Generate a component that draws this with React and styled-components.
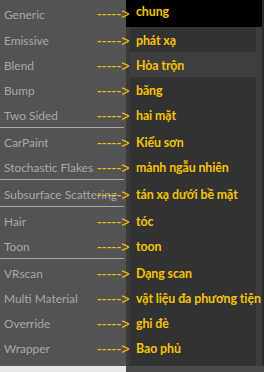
import styled, {createGlobalStyle} from 'styled-components'

const GlobalStyle = createGlobalStyle`
    html, body {
        margin: 0;
        padding: 0;
        background: #2a2a2a;
    }
    body {
        font-family: Lato, "Open Sans", "Liberation Sans", sans-serif;
    }
`

const Screen = styled.div`
    display: flex;
    flex-direction: column;
    width: 264px;
    height: 372px;
    overflow: hidden;
`

const List = styled.div`
    display: flex;
    flex-direction: column;
    background: #2a2a2a;
`

const Row = styled.div`
    position: relative;
    display: grid;
    grid-template-columns: 126px 1fr;
    height: ${p => p.$h}px;
    padding-right: 2px;
`

const Label = styled.div`
    display: flex;
    align-items: center;
    padding-left: 4px;
    padding-top: 2px;
    background: #535353;
    color: #a7a9ab;
    font-size: 11.9px;
    white-space: nowrap;
    overflow: visible;
`

const Line = styled.div`
    background: #535353;
    display: flex;
    align-items: flex-start;

    &::before {
        content: '';
        display: block;
        width: 124px;
        height: 1px;
        background: #a6a6a6;
    }
`

const Cell = styled.div`
    display: flex;
    align-items: ${p => p.$head ? 'flex-start' : 'center'};
    padding-left: 6px;
    padding-top: ${p => p.$head ? '4px' : '2px'};
    background: ${p => p.$head ? '#000' : p.$hot ? '#3e3e3e' : '#323232'};
    border-left: 4px solid ${p => p.$head ? '#000' : '#3a3a3a'};
    box-shadow: inset -6px 0 0 ${p => p.$head ? '#000' : '#3c3c3c'};
    color: #f5c400;
    font-size: 12.4px;
    font-weight: 700;
    letter-spacing: -0.1px;
    white-space: nowrap;
    overflow: visible;
`

const Arrow = styled.span`
    position: absolute;
    left: 97px;
    top: 50%;
    transform: translateY(-46%);
    color: #f5c400;
    font-family: "Liberation Sans", sans-serif;
    font-size: 14px;
    letter-spacing: 0.2px;
    pointer-events: none;
`

const Footer = styled.div`
    display: grid;
    grid-template-columns: 126px 1fr;
    flex: 1;
`

const FootLeft = styled.div`
    background: #e9e9e9;
`

const FootRight = styled.div`
    background: #4a4a4a;
`

const items = [
    ['Generic', 'chung', true],
    ['Emissive', 'phát xạ'],
    ['Blend', 'Hòa trộn'],
    ['Bump', 'băng'],
    ['Two Sided', 'hai mặt', true],
    ['CarPaint', 'Kiểu sơn'],
    ['Stochastic Flakes', 'mảnh ngẫu nhiên', true],
    ['Subsurface Scattering', 'tán xạ dưới bề mặt', true],
    ['Hair', 'tóc'],
    ['Toon', 'toon', true],
    ['VRscan', 'Dạng scan'],
    ['Multi Material', 'vật liệu đa phương tiện'],
    ['Override', 'ghi đè'],
    ['Wrapper', 'Bao phủ'],
]

function App() {
    return (
        <Screen>
            <GlobalStyle />
            <List>
                {items.map(([name, vi, sep], i) => (
                    <div key={name}>
                        <Row $h={i === 0 ? 27 : 25}>
                            <Label style={i === 0 ? {height: 25} : undefined}>{name}</Label>
                            <Cell $head={i === 0} $hot={name === 'Blend'}>{vi}</Cell>
                            <Arrow style={i === 0 ? {top: '13px'} : undefined}>-----&gt;</Arrow>
                        </Row>
                        {sep && i > 0 && (
                            <Row $h={2}>
                                <Line />
                                <Cell />
                            </Row>
                        )}
                    </div>
                ))}
                <Row $h={6}>
                    <Label />
                    <Cell />
                </Row>
            </List>
            <Footer>
                <FootLeft />
                <FootRight />
            </Footer>
        </Screen>
    )
}

export default App
